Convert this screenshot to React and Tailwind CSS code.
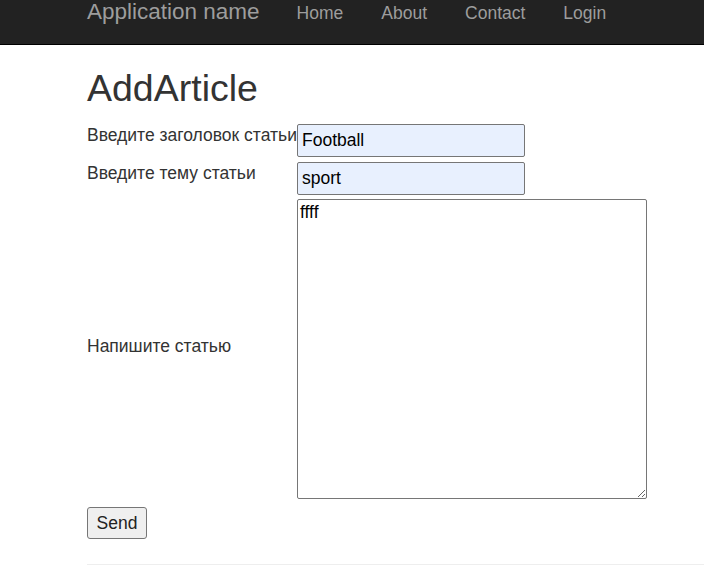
import React from 'react';

const navLinks = ['Home', 'About', 'Contact', 'Login'];

const App = () => {
  return (
    <div className="min-h-screen bg-white text-[#333] font-['Liberation_Sans',Arial,sans-serif] text-[17.5px]">
      {/* Navbar */}
      <div className="h-[45px] bg-[#222] border-b border-black flex items-start pl-[87px]">
        <span className="text-[22.5px] leading-[22px] pt-[1px] text-[#9d9d9d] mr-[18px]">Application name</span>
        {navLinks.map((link) => (
          <span key={link} className="px-[19px] pt-[3px] leading-[20px] text-[#9d9d9d]">
            {link}
          </span>
        ))}
      </div>

      <div className="pl-[87px]">
        <h2 className="mt-[23px] text-[37.5px] leading-[41px] font-normal">AddArticle</h2>

        <form className="mt-[15px]" onSubmit={(e) => e.preventDefault()}>
          <div className="flex items-start">
            <label className="w-[210px] leading-[25px] -mt-[1px] whitespace-nowrap">Введите заголовок статьи</label>
            <input
              defaultValue="Football"
              className="w-[228px] h-[33px] px-[4px] bg-[#e8f0fe] border border-[#767676] rounded-[2px] text-[#000] outline-none"
            />
          </div>
          <div className="flex items-start mt-[5px]">
            <label className="w-[210px] leading-[25px] -mt-[1px] whitespace-nowrap">Введите тему статьи</label>
            <input
              defaultValue="sport"
              className="w-[228px] h-[33px] px-[4px] bg-[#e8f0fe] border border-[#767676] rounded-[2px] text-[#000] outline-none"
            />
          </div>
          <div className="flex items-center mt-[4px]">
            <label className="w-[210px] leading-[25px] -mt-[6px] whitespace-nowrap">Напишите статью</label>
            <textarea
              defaultValue="ffff"
              className="w-[350px] h-[300px] p-[2px] leading-[20px] border border-[#767676] rounded-[2px] text-[#000] outline-none resize"
            />
          </div>
          <button
            type="submit"
            className="mt-[8px] h-[32px] w-[60px] bg-[#efefef] border border-[#767676] rounded-[3px] text-[#222] leading-[20px]"
          >
            Send
          </button>
        </form>

        <hr className="mt-[25px] border-0 border-t border-[#eee]" />
      </div>
    </div>
  );
};

export default App;
